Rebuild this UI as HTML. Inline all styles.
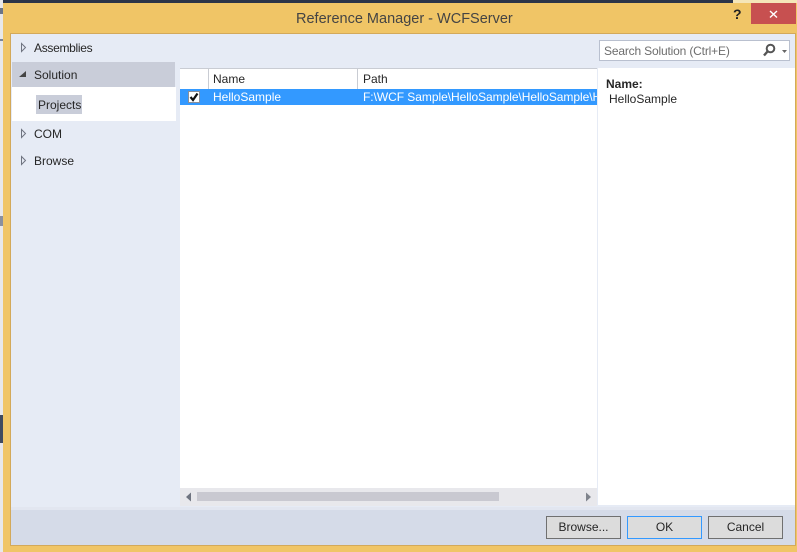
<!DOCTYPE html>
<html><head><meta charset="utf-8">
<style>
html,body{margin:0;padding:0}
body{width:797px;height:552px;overflow:hidden;position:relative;background:#f0c566;font-family:"Liberation Sans",sans-serif;font-size:12px;color:#262626}
div{position:absolute;box-sizing:border-box;white-space:nowrap}
svg{position:absolute}
.t{line-height:16px;height:16px}
</style></head><body>
<div style="left:0;top:0;width:733px;height:3px;background:#2c3548"></div>
<div style="left:733px;top:0;width:64px;height:3px;background:#f5e6b8"></div>
<div style="left:0;top:0;width:3px;height:552px;background:#e8e8ea"></div>
<div style="left:0;top:8px;width:3px;height:6px;background:#6a7488"></div>
<div style="left:0;top:39px;width:3px;height:2px;background:#7a8498"></div>
<div style="left:0;top:216px;width:3px;height:10px;background:#8a90a0"></div>
<div style="left:0;top:415px;width:3px;height:28px;background:#3f4a60"></div>
<div style="left:3px;top:3px;width:794px;height:549px;background:#f0c566"></div>
<div style="left:10px;top:33px;width:786px;height:513px;border:1px solid #d3a95a;background:#e6ebf5"></div>

<div style="left:296px;top:9px;font-size:14.5px;line-height:20px;color:#444">Reference Manager - WCFServer</div>
<div style="left:733px;top:6px;font-size:14px;font-weight:bold;line-height:16px;color:#222">?</div>
<div style="left:751px;top:3px;width:45px;height:21px;background:#c75050"></div>
<svg style="left:751px;top:3px" width="45" height="21"><path d="M19 8L26 14.5M26 8L19 14.5" stroke="#fff" stroke-width="1.4" fill="none"/></svg>

<div style="left:12px;top:62px;width:163px;height:25px;background:#c9cdd9"></div>
<div style="left:12px;top:87px;width:164px;height:34px;background:#fff"></div>
<div style="left:36px;top:95px;width:46px;height:19px;background:#c9cdd9"></div>

<svg style="left:18px;top:40px" width="12" height="130">
<path d="M3.5 3.5L7.5 7.5L3.5 11.5Z" fill="#e6ebf5" stroke="#6f7480"/>
<path d="M1 37H8V31Z" fill="#444"/>
<path d="M3.5 89.5L7.5 93.5L3.5 97.5Z" fill="#e6ebf5" stroke="#6f7480"/>
<path d="M3.5 116.5L7.5 120.5L3.5 124.5Z" fill="#e6ebf5" stroke="#6f7480"/>
</svg>
<div class="t" style="left:34px;top:40px;letter-spacing:-.3px">Assemblies</div>
<div class="t" style="left:34px;top:67px">Solution</div>
<div class="t" style="left:38px;top:97px">Projects</div>
<div class="t" style="left:34px;top:126px">COM</div>
<div class="t" style="left:34px;top:153px">Browse</div>

<div style="left:180px;top:68px;width:417px;height:438px;background:#fff"></div>
<div style="left:180px;top:68px;width:417px;height:21px;background:#fff;border-top:1px solid #c9ccd3"></div>
<div style="left:208px;top:69px;width:1px;height:20px;background:#c9ccd3"></div>
<div style="left:357px;top:69px;width:1px;height:20px;background:#c9ccd3"></div>
<div class="t" style="left:213px;top:71px">Name</div>
<div class="t" style="left:363px;top:71px">Path</div>
<div style="left:180px;top:89px;width:417px;height:16px;background:#3399ff;overflow:hidden"></div>
<div style="left:188px;top:91px;width:12px;height:12px;background:#fff;border:1px solid #8a8f99"></div>
<svg style="left:188px;top:91px" width="12" height="12"><path d="M2.5 6L5 9L9.5 2.5" stroke="#111" stroke-width="2.2" fill="none"/></svg>
<div class="t" style="left:213px;top:89px;color:#fff">HelloSample</div>
<div class="t" style="left:363px;top:89px;width:234px;overflow:hidden;color:#fff;letter-spacing:-.05px">F:\WCF Sample\HelloSample\HelloSample\HelloSample</div>

<div style="left:180px;top:488px;width:417px;height:18px;background:#e8e8ec"></div>
<div style="left:197px;top:492px;width:302px;height:9px;background:#c9c9d1"></div>
<svg style="left:180px;top:488px" width="417" height="18"><path d="M11 4.5V13.5L6 9Z" fill="#6f7480"/><path d="M406 4.5V13.5L411 9Z" fill="#7f838c"/></svg>

<div style="left:598px;top:68px;width:197px;height:437px;background:#fff"></div>
<div style="left:597px;top:68px;width:1px;height:438px;background:#e6ebf5"></div>
<div style="left:599px;top:40px;width:191px;height:21px;background:#fff;border:1px solid #b9c0cf"></div>
<div class="t" style="left:604px;top:43px;color:#6d6d6d;letter-spacing:-.17px">Search Solution (Ctrl+E)</div>
<svg style="left:760px;top:42px" width="28" height="16">
<circle cx="10.5" cy="6.5" r="3.8" fill="none" stroke="#555" stroke-width="2"/>
<path d="M7.5 9.5L4 13.5" stroke="#555" stroke-width="2.4" fill="none"/>
<path d="M22 8H27L24.5 11Z" fill="#666"/>
</svg>
<div class="t" style="left:606px;top:76px;font-weight:bold">Name:</div>
<div class="t" style="left:609px;top:91px">HelloSample</div>

<div style="left:11px;top:507px;width:784px;height:3px;background:#e2e6f0"></div>
<div style="left:11px;top:510px;width:784px;height:35px;background:#d5dbe8"></div>
<div style="left:546px;top:516px;width:75px;height:23px;background:#dcdcdc;border:1px solid #707070;text-align:center;line-height:21px">Browse...</div>
<div style="left:627px;top:516px;width:75px;height:23px;background:#dcdcdc;border:1px solid #3399ff;text-align:center;line-height:21px">OK</div>
<div style="left:708px;top:516px;width:75px;height:23px;background:#dcdcdc;border:1px solid #707070;text-align:center;line-height:21px">Cancel</div>
</body></html>
